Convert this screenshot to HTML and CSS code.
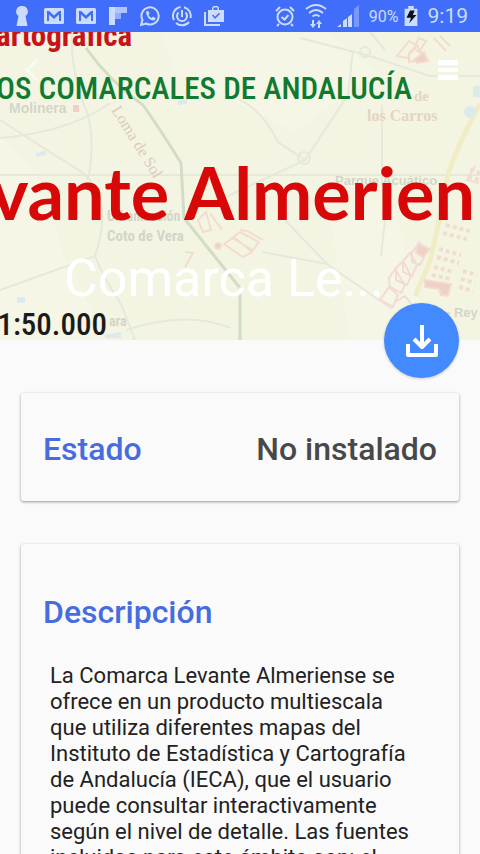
FILE: index.html
```html
<!DOCTYPE html>
<html lang="es">
<head>
<meta charset="utf-8">
<meta name="viewport" content="width=device-width, initial-scale=1">
<title>Comarca Levante Almeriense</title>
<link rel="stylesheet" href="styles.css">
</head>
<body>
<div class="status-bar">
  <div class="status-group status-left">
    <svg viewBox="0 0 20 24"><path d="M10 2a5.500 5.500 0 0 0-3.500 10L4.500 22h11L13.500 12A5.500 5.500 0 0 0 10 2z"/></svg>
    <svg viewBox="0 0 20 24"><path fill-rule="evenodd" d="M1.500 4h17a1.500 1.500 0 0 1 1.500 1.500v13a1.500 1.500 0 0 1-1.500 1.500h-17A1.500 1.500 0 0 1 0 18.500v-13A1.500 1.500 0 0 1 1.500 4zM3 7v10h2v-6.500l5 4.500 5-4.500V17h2V7h-2l-5 4.500L5 7z"/></svg>
    <svg viewBox="0 0 20 24"><path fill-rule="evenodd" d="M1.500 4h17a1.500 1.500 0 0 1 1.500 1.500v13a1.500 1.500 0 0 1-1.500 1.500h-17A1.500 1.500 0 0 1 0 18.500v-13A1.500 1.500 0 0 1 1.500 4zM3 7v10h2v-6.500l5 4.500 5-4.500V17h2V7h-2l-5 4.500L5 7z"/></svg>
    <svg viewBox="0 0 20 24"><path d="M1 3h6v18H1z"/><path opacity=".8" d="M7 3h12v6H7z"/><path opacity=".6" d="M7 9h6v6H7z"/></svg>
    <svg viewBox="0 0 20 24"><path class="line" d="M1 21l1.500-5A8.600 8.600 0 1 1 6 19.500z"/><path d="M6 8l2-1.500 1.500 3-1 1.500q1 2 3 3l1.500-1.500 2.500 1.500q0 2.500-2.500 2.500Q7 15.500 6 8z"/></svg>
    <svg viewBox="0 0 20 24"><path class="line" d="M8.500 3A9 9 0 0 0 2 16M4 19a9 9 0 0 0 13-1M18.500 14A9 9 0 0 0 12 3.200"/><path class="line" d="M6.500 8.500a5 5 0 1 0 7 0M10 6v7"/></svg>
    <svg viewBox="0 0 20 24"><path d="M0 8h2v12h14v2H0z"/><path fill-rule="evenodd" d="M4 6h4V3.500L9.500 2h4L15 3.500V6h5v12H4zm5.500 0h4V3.500h-4zM8 11.500l3 3.500 5-5-1-1.200-4 4-1.800-2.300z"/></svg>
  </div>
  <div class="status-group status-right">
    <svg viewBox="0 0 20 24"><circle class="line" cx="10" cy="13" r="7.500"/><path class="line" d="M6.500 13l3 2.500 4-4.500M1 7l4-4M19 7l-4-4M4 20l-2 2M16 20l2 2"/></svg>
    <svg class="wifi" viewBox="0 0 22 26"><path class="line" d="M1 6q10-8 20 0M4 10q7-6 14 0M7.500 13.500q3.500-3 7 0"/><path d="M7 17h2v4h2l-3 4-3-4h2zM13 25h2v-4h2l-3-4-3 4h2z"/></svg>
    <svg class="signal" viewBox="0 0 22 24"><path d="M0 23l4-3v3zM6 17l4-3v9H6zM11 13l4-3v13h-4z"/><path opacity=".4" d="M17 5l5-4v22h-5z"/></svg>
    <span class="battery-level">90%</span>
    <svg class="battery" viewBox="0 0 14 22"><path d="M0 3h4V0h6v3h4v19H0z"/><path class="bolt" d="M6 5h5L9 10h4L5 19l2-6H2z"/></svg>
    <time class="clock">9:19</time>
  </div>
</div>
<header class="hero">
  <svg class="map" viewBox="0 32 480 308" preserveAspectRatio="xMidYMid slice" aria-hidden="true">
    <rect y="32" width="480" height="308" fill="#f3f5e2"/>
    <path class="pale" d="M0 135l45 50 18 70 45 85H0zM160 32h170l45 40-80 60-120-60zM330 215l60-20 40 145H350z"/>
    <g class="contour">
      <path d="M0 138q70-6 110-35M72 32q-2 40 16 83 7 30 0 65M0 290l95-34q20-60-15-85L0 120M240 100q22 10 38 42l27 18 43-65 5-45M300 38l70 18 60 20h50M305 160l-90 42M385 50l-15-18M0 175h480M382 105v80"/>
      <path d="M95 256q10 25 26 48l14 36M126 330q60-20 105-2M285 220l42 44-65-12M327 264l65 45M385 220l-4 36"/>
      <circle cx="304" cy="158" r="6"/><circle cx="365" cy="52" r="5"/>
    </g>
    <path class="green-road" d="M86 48q24 34 57 57 17 24 38 58l3 55 56 70v52"/>
    <path class="yellow-road" d="M480 104q-22 40-32 70-10 55-19 90l-14 32"/>
    <g class="blocks">
      <path d="M397 56l12-15 8 4-10 13zM409 53l8-8 7 14-15 3zM419 38l7 3-7 11-5-4zM434 38l12 13M440 36l10 10M198 220l8-8 5 18-8 2zM210 213l12 17M224 244l10-7 18 15-9 5zM232 238l8-6 19 10-6 8zM240 230l7 1 16 9M185 252l8 1-8 14M475 166l-8 14 12 3"/>
      <path d="M412 252l8-9 6 10-6 12-8-3zM403 261l7-8 7 12-5 11-9-4zM396 268l7-7 8 15-4 9-11-5zM389 278l6-9 10 16-4 8-11-6zM380 300l9-13 9 8-5 12zM395 302l10-6 7 9"/>
      <path class="solid" d="M418 243l12 6-7 8-7-4zM414 60l10-8 4 9-11 2zM425 280l26 4-3 12-7-1-2-6-14-2zM218 243a3 3 0 1 0 .1 0z"/>
      <path class="dash" d="M446 225l24 6M443 233l24 6M439 249l22 6M437 257l22 6M434 267l20 5M432 275l18 4M470 170l10 3M468 177l12 3M463 271l14 4M461 279l14 4M459 287l14 4"/>
    </g>
    <g class="water"><circle cx="470" cy="112" r="6"/><path d="M473 86h7v11h-7zM178 101l10-3-1 6-9 1zM36 153l10-3v5l-10 2zM17 297h8v6h-8zM105 335l16-3v6h-16z"/></g>
    <path class="marker" d="M73 105h6v7h-6z"/>
    <g class="labels">
      <text x="9" y="113" font-size="14">Molinera</text>
      <text x="107" y="241" class="narrow" font-size="15">Coto de Vera</text>
      <text x="107" y="221" class="narrow" font-size="14">Urbanización</text>
      <text x="335" y="185" font-size="13">Parque Acuático</text>
      <text x="446" y="317" font-size="13">- Rey</text>
      <text x="109" y="326" class="narrow" font-size="14">ara</text>
      <text class="serif" x="414" y="101" font-size="15">de</text>
      <text class="serif" x="367" y="121" font-size="16">los Carros</text>
      <text class="serif loma" transform="translate(111 110) rotate(58)" font-size="16">Loma de Sol</text>
    </g>
    <text class="cover-series" x="132" y="46">artográfica</text>
    <text class="cover-region" x="412" y="99">OS COMARCALES DE ANDALUCÍA</text>
    <text class="cover-title" x="475" y="220">vante Almerien</text>
    <text class="cover-scale" x="107" y="335">1:50.000</text>
  </svg>
  <nav class="toolbar">
    <button class="icon-button back" type="button" aria-label="Volver"><svg viewBox="0 0 20 20"><path d="M15 0L5 10l10 10" fill="none" stroke="#fff" stroke-width="3"/></svg></button>
    <button class="icon-button" type="button" aria-label="Menú"><svg viewBox="0 0 20 20"><path d="M0 0h20v5H0zM0 8h20v4H0zM0 15h20v5H0z" fill="#fff"/></svg></button>
  </nav>
  <h1 class="hero-title">Comarca Le...</h1>
  <button class="download" type="button" aria-label="Descargar"><svg viewBox="0 0 32 32"><path d="M16 0v21M8 14l8 8 8-8M2 19v11h28V19" fill="none" stroke="#fff" stroke-width="4" stroke-linejoin="round"/></svg></button>
</header>
<main class="content">
  <section class="card state">
    <h2 class="card-heading">Estado</h2>
    <p class="state-value">No instalado</p>
  </section>
  <section class="card description">
    <h2 class="card-heading">Descripción</h2>
    <p class="description-text">La Comarca Levante Almeriense se ofrece en un producto multiescala que utiliza diferentes mapas del Instituto de Estadística y Cartografía de Andalucía (IECA), que el usuario puede consultar interactivamente según el nivel de detalle. Las fuentes incluidas para este ámbito son: el</p>
  </section>
</main>
</body>
</html>
```
FILE: styles.css
```css
* { box-sizing: border-box; }
body { margin: 0; background: #fafafa; color: #222; font-family: Roboto, "Noto Sans", sans-serif; }
h1, h2, p { margin: 0; font-weight: 400; }
button { padding: 0; border: 0; background: none; }

.status-bar { display: flex; justify-content: space-between; height: 32px; padding: 0 12px; background: #416dfb; color: #cbdcff; }
.status-group { display: flex; align-items: center; }
.status-group svg { width: 20px; height: 24px; fill: #cbdcff; }
.status-group .line { fill: none; stroke: #cbdcff; stroke-width: 2; }
.status-left { gap: 12px; }
.status-right { gap: 10px; }
.status-group .wifi { width: 22px; height: 26px; }
.status-group .signal { width: 22px; height: 24px; }
.status-group .battery { width: 14px; height: 20px; margin-left: -5px; }
.status-group .bolt { fill: #0b0f1c; }
.battery-level { font-size: 16px; }
.clock { font-size: 21px; }

.hero { position: relative; display: flex; flex-direction: column; justify-content: space-between; height: 308px; }
.map { position: absolute; inset: 0; width: 100%; height: 100%; }
.pale { fill: #f5f6e6; }
.contour { fill: none; stroke: #e6e8da; stroke-width: 2; }
.green-road { fill: none; stroke: #d3dcc6; stroke-width: 3; }
.yellow-road { fill: none; stroke: #f0edc6; stroke-width: 5; }
.blocks { fill: none; stroke: #f2dcd1; stroke-width: 2; }
.blocks .solid { fill: #f0cfc6; }
.blocks .dash { stroke-width: 4; stroke-dasharray: 4 3; }
.marker { fill: #f0cfc6; }
.water { fill: #dceaec; }
.labels { fill: #d3d5c8; font-family: "Liberation Sans", sans-serif; font-weight: 700; }
.labels .serif { fill: #e5d4c5; font-family: "Liberation Serif", serif; }
.labels .loma { font-weight: 400; fill: #dccabc; }
.labels .narrow, .cover-series, .cover-region, .cover-scale { font-family: "Roboto Condensed", "Liberation Sans Narrow", sans-serif; }
.cover-series, .cover-region, .cover-scale { text-anchor: end; }
.cover-series { fill: #c81418; font-size: 31px; font-weight: 700; }
.cover-region { fill: #107a30; font-size: 31px; font-weight: 500; }
.cover-scale { fill: #1b1b19; font-size: 31px; font-weight: 500; }
.cover-title { fill: #d90808; font-family: Lato, sans-serif; font-size: 72px; font-weight: 700; text-anchor: end; }

.toolbar { position: relative; display: flex; justify-content: space-between; padding: 28px 22px 0; }
.icon-button, .icon-button svg { display: block; width: 20px; height: 20px; }
.back { opacity: .5; }
.hero-title { position: relative; padding: 0 64px 30px; color: #fff; font-size: 52px; line-height: 62px; white-space: nowrap; }
.download { position: absolute; right: 21px; bottom: -38px; display: grid; place-items: center; width: 75px; height: 75px; border-radius: 50%; background: #448aff; box-shadow: 0 1px 3px #0003; }
.download svg { width: 32px; height: 32px; }

.content { display: flex; flex-direction: column; gap: 43px; padding: 53px 21px 20px; }
.card { border-radius: 3px; background: #fafafa; box-shadow: 0 1px 3px #0006; }
.card-heading, .state-value { font-size: 32px; line-height: 36px; font-weight: 500; }
.card-heading { color: #466ce0; }
.state-value { color: #484848; }
.state { display: flex; justify-content: space-between; padding: 38px 22px 34px; }
.description { padding: 50px 22px 24px; }
.description-text { padding: 33px 24px 0 7px; font-size: 22px; line-height: 26px; }
```
